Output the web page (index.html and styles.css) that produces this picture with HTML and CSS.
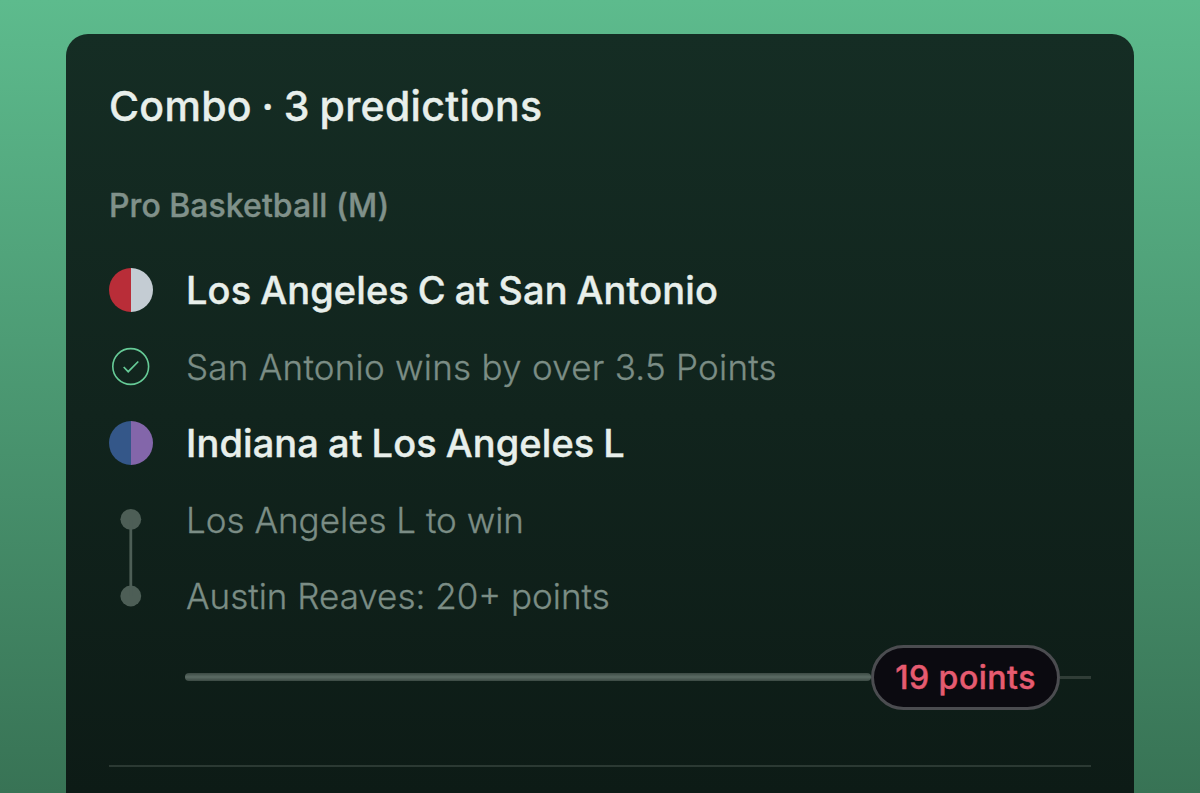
FILE: index.html
```html
<!DOCTYPE html>
<html lang="en">
<head>
<meta charset="utf-8">
<title>Combo</title>
<link rel="stylesheet" href="styles.css">
</head>
<body>
<main class="card">
  <h1 class="title">Combo · 3 predictions</h1>
  <h2 class="league">Pro Basketball (M)</h2>
  <div class="row game">
    <svg class="icon" viewBox="0 0 44 44"><path d="M22 0a22 22 0 0 0 0 44z" fill="#b92d38"/><path d="M22 0a22 22 0 0 1 0 44z" fill="#c4ccd3"/></svg>
    <span class="label">Los Angeles C at San Antonio</span>
  </div>
  <div class="row leg">
    <svg class="icon" viewBox="0 0 44 44" fill="none" stroke="#66cb97" stroke-width="1.6"><circle cx="21.700" cy="21.500" r="17.900"/><path d="M14.700 22l4.500 4.700L29.300 16.500" stroke-width="1.7"/></svg>
    <span class="label spread">San Antonio wins by over 3.5 Points</span>
  </div>
  <div class="row game">
    <svg class="icon" viewBox="0 0 44 44"><path d="M22 0a22 22 0 0 0 0 44z" fill="#345789"/><path d="M22 0a22 22 0 0 1 0 44z" fill="#8366aa"/></svg>
    <span class="label">Indiana at Los Angeles L</span>
  </div>
  <div class="legs">
    <svg class="rail" viewBox="0 0 44 153" fill="#4d5e56"><circle cx="21.800" cy="37.300" r="10.400"/><circle cx="21.800" cy="114" r="10.400"/><path d="M20.400 38h2.800v76h-2.800z"/></svg>
    <div class="leg-list">
      <div class="leg"><span class="label">Los Angeles L to win</span></div>
      <div class="leg"><span class="label">Austin Reaves: 20+ points</span></div>
    </div>
  </div>
  <div class="progress"><span class="done"></span><span class="pill">19 points</span><span class="rest"></span></div>
  <div class="divider"></div>
</main>
</body>
</html>
```
FILE: styles.css
```css
* { box-sizing: border-box; }
body { margin: 0; height: 793px; overflow: hidden; padding: 34px 66px 0; background: linear-gradient(#5dbb8d, #387355); font-family: Inter, "Liberation Sans", sans-serif; }
.card { height: 759px; padding: 44px 43px 0; border-radius: 22px 22px 0 0; background: linear-gradient(#152d24, #0d1b16); }
.title, .league { margin: 0; white-space: nowrap; font-weight: 500; }
.title, .league, .game, .pill { -webkit-text-stroke-width: 0.4px; }
.title { height: 58px; line-height: 57px; font-size: 41px; letter-spacing: 0.3px; word-spacing: -1.6px; color: #e8efeb; }
.league { height: 60px; margin-top: 40px; line-height: 60px; font-size: 32px; letter-spacing: 0.04px; color: #80918a; }
.row { display: flex; align-items: center; gap: 33px; height: 76.5px; }
.league + .row { margin-top: 16px; }
.icon { width: 44px; height: 44px; flex: none; }
.label { white-space: nowrap; }
.game { font-size: 38px; font-weight: 500; letter-spacing: 0.1px; word-spacing: -1.3px; color: #e8efeb; }
.leg { font-size: 35px; font-weight: 300; -webkit-text-stroke-width: 0.3px; color: #7b8d85; }
.spread { letter-spacing: 0.24px; }
.legs { display: flex; gap: 33px; height: 153px; }
.rail { width: 44px; height: 153px; flex: none; }
.leg-list .leg { display: flex; align-items: center; height: 76.5px; }
.progress { display: flex; align-items: center; height: 65px; margin: 10px 0 0 76px; }
.done { flex: 1; height: 8px; border-radius: 4px; background: linear-gradient(#3c4a44, #5b6b64 50%, #3c4a44); }
.pill { display: flex; align-items: center; justify-content: center; width: 189px; height: 65px; border: 3px solid #4b4c50; border-radius: 33px; background: #0b0a10; color: #e65b70; font-size: 32px; font-weight: 500; letter-spacing: 0.5px; white-space: nowrap; }
.rest { width: 31px; height: 3px; background: #303d37; }
.divider { height: 2px; margin-top: 55px; background: #2b3933; }
```
